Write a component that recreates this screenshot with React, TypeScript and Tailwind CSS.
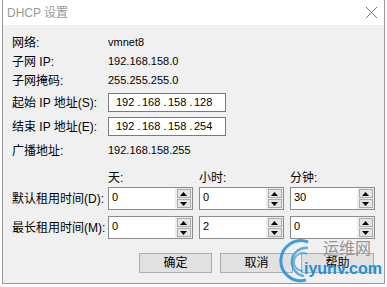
import React from 'react';

const FONT = "'Liberation Sans', 'Noto Sans CJK SC', sans-serif";

function InfoRow({ label, value }: { label: string; value: string }) {
  return (
    <div className="flex h-[19px] items-center">
      <div className="w-[96px] text-[12px] leading-none text-black">{label}</div>
      <div className="text-[11px] leading-none text-black">{value}</div>
    </div>
  );
}

function IpRow({ label, ip }: { label: string; ip: string[] }) {
  return (
    <div className="flex h-[19px] items-center">
      <div className="w-[96px] text-[12px] leading-none text-black">{label}</div>
      <div className="flex h-[19px] w-[118px] items-center border border-[#7a7a7a] bg-white pl-[7px] text-[11px] leading-none text-black">
        {ip.map((part, i) => (
          <React.Fragment key={i}>
            {i > 0 && <span className="w-[6px] text-center">.</span>}
            <span className="w-[20px]">{part}</span>
          </React.Fragment>
        ))}
      </div>
    </div>
  );
}

function Arrow({ up }: { up?: boolean }) {
  return (
    <svg width="7" height="4" viewBox="0 0 7 4">
      <polygon points={up ? '0,4 7,4 3.5,0' : '0,0 7,0 3.5,4'} fill="#000" />
    </svg>
  );
}

function Spin({ value }: { value: string }) {
  return (
    <div className="flex h-[23px] w-[85px] border border-[#8c8c8c] bg-white">
      <div className="flex flex-1 items-center pb-[2px] pl-[3px] text-[11px] leading-none text-black">{value}</div>
      <div className="flex w-[17px] flex-col items-center justify-center gap-[1px] bg-[#ececec]">
        <div className="flex h-[9px] w-[14px] items-center justify-center border border-[#acacac] bg-[#e5e5e5]">
          <Arrow up />
        </div>
        <div className="flex h-[9px] w-[14px] items-center justify-center border border-[#acacac] bg-[#e5e5e5]">
          <Arrow />
        </div>
      </div>
    </div>
  );
}

function Btn({ children }: { children: React.ReactNode }) {
  return (
    <div className="flex h-[20px] w-[73px] items-center justify-center border border-[#adadad] bg-[#e1e1e1] text-[12px] leading-none text-black">
      {children}
    </div>
  );
}

export default function App() {
  return (
    <div className="relative h-[287px] w-[387px] overflow-hidden bg-white" style={{ fontFamily: FONT }}>
      <div className="ml-[2px] flex h-[284px] w-[383px] flex-col border border-t-0 border-[#9a9a9a] bg-[#f0f0f0]">
        {/* title bar */}
        <div className="flex h-[25px] items-center justify-between bg-white pl-[4px] pr-[6px]">
          <span className="text-[12px] leading-none text-[#999]">DHCP 设置</span>
          <svg width="13" height="13" viewBox="0 0 13 13">
            <path d="M1 1 L12 12 M12 1 L1 12" stroke="#777" strokeWidth="1" />
          </svg>
        </div>

        <div className="flex flex-col pl-[9px] pt-[8px]">
          <InfoRow label="网络:" value="vmnet8" />
          <InfoRow label="子网 IP:" value="192.168.158.0" />
          <InfoRow label="子网掩码:" value="255.255.255.0" />
          <div className="mt-[3px]">
            <IpRow label="起始 IP 地址(S):" ip={['192', '168', '158', '128']} />
          </div>
          <div className="mt-[5px]">
            <IpRow label="结束 IP 地址(E):" ip={['192', '168', '158', '254']} />
          </div>
          <div className="mt-[5px]">
            <InfoRow label="广播地址:" value="192.168.158.255" />
          </div>

          <div className="mt-[9px] flex h-[18px] items-center text-[12px] leading-none text-black">
            <div className="w-[96px]" />
            <div className="grid grid-cols-[85px_85px_85px] gap-x-[6px]">
              <span>天:</span>
              <span>小时:</span>
              <span>分钟:</span>
            </div>
          </div>

          <div className="flex items-center">
            <div className="w-[96px] text-[12px] leading-none text-black">默认租用时间(D):</div>
            <div className="flex gap-[6px]">
              <Spin value="0" />
              <Spin value="0" />
              <Spin value="30" />
            </div>
          </div>
          <div className="mt-[6px] flex items-center">
            <div className="w-[96px] text-[12px] leading-none text-black">最长租用时间(M):</div>
            <div className="flex gap-[6px]">
              <Spin value="0" />
              <Spin value="2" />
              <Spin value="0" />
            </div>
          </div>
        </div>

        <div className="mt-[14px] flex justify-end gap-[8px] pr-[10px]">
          <Btn>确定</Btn>
          <Btn>取消</Btn>
          <Btn>帮助</Btn>
        </div>
      </div>

      {/* watermark */}
      <div className="pointer-events-none absolute left-[278px] top-[238px] h-[46px] w-[108px]">
        <svg className="absolute left-0 top-0" width="40" height="46" viewBox="0 0 40 46">
          <path d="M30 4 A20 20 0 1 0 28 42" stroke="#1e8fd8" strokeWidth="3" fill="none" opacity="0.85" />
          <path d="M30 10 A14 14 0 1 0 26 38" stroke="#1e8fd8" strokeWidth="2.5" fill="none" opacity="0.7" />
          <path d="M29 16 A9 9 0 1 0 25 33" stroke="#1e8fd8" strokeWidth="2" fill="none" opacity="0.6" />
        </svg>
        <span className="absolute left-[45px] top-[3px] text-[16px] leading-none text-[#8a8a8a] opacity-90">运维网</span>
        <span className="absolute left-[26px] top-[23px] text-[16px] font-bold leading-none text-[#1e8fd8]">iyunv.com</span>
      </div>
    </div>
  );
}
